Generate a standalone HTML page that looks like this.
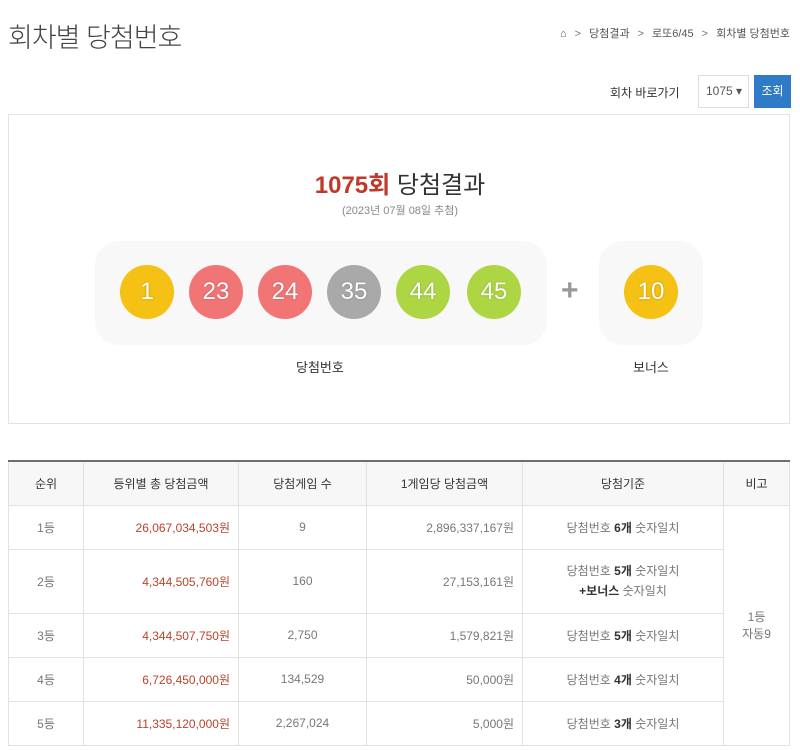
<!DOCTYPE html>
<html><head><meta charset="utf-8"><style>
*{margin:0;padding:0;box-sizing:border-box}
body{width:800px;height:750px;background:#fff;font-family:"Liberation Sans","Noto Sans CJK KR",sans-serif;color:#333;position:relative;overflow:hidden}
.a{position:absolute}
h1{position:absolute;left:8px;top:16px;font-size:27px;font-weight:300;color:#444;letter-spacing:-1px}
.bc{right:10px;top:25px;font-size:11px;color:#555;white-space:nowrap}
.bc span{margin:0 8px;color:#777}
.ball{position:absolute;width:54px;height:54px;border-radius:50%;top:265px;color:#fff;font-size:24px;text-align:center;line-height:54px;font-weight:500;text-shadow:0 0 2px rgba(0,0,0,.25)}
.y{background:#f5c115}.r{background:#f27576}.g{background:#a9a9a9}.gr{background:#aed644}
table{position:absolute;left:8px;top:460px;width:782px;border-collapse:collapse;border-top:2px solid #6e6e6e;font-size:12px;color:#777}
td,th{border:1px solid #e2e2e2;text-align:center;height:44px}
th{background:#f7f7f7;font-weight:normal;color:#333}
tr:first-child th{border-top:0}
td.rt{text-align:right;padding-right:8px}
.red{color:#b9432c}
b{color:#333}
</style></head><body>
<h1>회차별 당첨번호</h1>
<div class="a bc">&#8962;<span>&gt;</span>당첨결과<span>&gt;</span>로또6/45<span>&gt;</span>회차별 당첨번호</div>
<div class="a" style="left:610px;top:84px;font-size:12px;color:#333">회차 바로가기</div>
<div class="a" style="left:698px;top:75px;width:51px;height:33px;border:1px solid #ddd;font-size:12px;line-height:31px;padding-left:7px;color:#555">1075 ▾</div>
<div class="a" style="left:754px;top:75px;width:37px;height:33px;background:#2f7bc7;color:#fff;font-size:12px;line-height:33px;text-align:center">조회</div>
<div class="a" style="left:8px;top:114px;width:782px;height:310px;border:1px solid #e3e3e3"></div>
<div class="a" style="left:0;width:800px;top:165px;text-align:center;font-size:24px;color:#333"><span style="color:#c0392b;font-weight:bold">1075회</span> 당첨결과</div>
<div class="a" style="left:0;width:800px;top:202px;text-align:center;font-size:11px;color:#888">(2023년 07월 08일 추첨)</div>
<div class="a" style="left:95px;top:241px;width:452px;height:104px;border-radius:24px;background:#f8f8f8"></div>
<div class="a" style="left:599px;top:241px;width:104px;height:104px;border-radius:24px;background:#f8f8f8"></div>
<div class="ball y" style="left:120px">1</div>
<div class="ball r" style="left:189px">23</div>
<div class="ball r" style="left:258px">24</div>
<div class="ball g" style="left:327px">35</div>
<div class="ball gr" style="left:396px">44</div>
<div class="ball gr" style="left:467px">45</div>
<div class="a" style="left:561px;top:274px;font-size:30px;color:#999;font-weight:bold">+</div>
<div class="ball y" style="left:624px">10</div>
<div class="a" style="left:296px;top:357px;font-size:13px;color:#333">당첨번호</div>
<div class="a" style="left:633px;top:357px;font-size:13px;color:#333">보너스</div>
<table>
<tr><th style="width:75px">순위</th><th style="width:155px">등위별 총 당첨금액</th><th style="width:128px">당첨게임 수</th><th style="width:156px">1게임당 당첨금액</th><th style="width:201px">당첨기준</th><th>비고</th></tr>
<tr><td>1등</td><td class="rt red">26,067,034,503원</td><td>9</td><td class="rt">2,896,337,167원</td><td>당첨번호 <b>6개</b> 숫자일치</td><td rowspan="5">1등<br>자동9</td></tr>
<tr style="height:64px"><td>2등</td><td class="rt red">4,344,505,760원</td><td>160</td><td class="rt">27,153,161원</td><td style="line-height:20px">당첨번호 <b>5개</b> 숫자일치<br><b>+보너스</b> 숫자일치</td></tr>
<tr><td>3등</td><td class="rt red">4,344,507,750원</td><td>2,750</td><td class="rt">1,579,821원</td><td>당첨번호 <b>5개</b> 숫자일치</td></tr>
<tr><td>4등</td><td class="rt red">6,726,450,000원</td><td>134,529</td><td class="rt">50,000원</td><td>당첨번호 <b>4개</b> 숫자일치</td></tr>
<tr><td>5등</td><td class="rt red">11,335,120,000원</td><td>2,267,024</td><td class="rt">5,000원</td><td>당첨번호 <b>3개</b> 숫자일치</td></tr>
</table>
</body></html>
